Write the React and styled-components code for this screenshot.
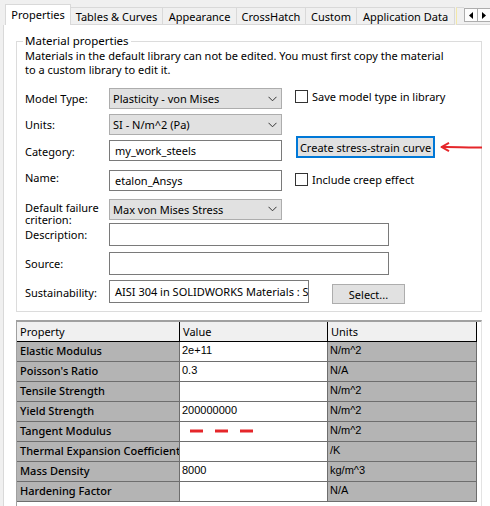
import styled, { createGlobalStyle } from "styled-components";

const GlobalStyle = createGlobalStyle`
  html, body {
    margin: 0;
    padding: 0;
    background: #ffffff;
  }
  body {
    font-family: "Noto Sans", "Liberation Sans", sans-serif;
    font-size: 11px;
    color: #000000;
  }
`;

const Window = styled.div`
  width: 490px;
  height: 506px;
  overflow: hidden;
  display: flex;
  flex-direction: column;
  background: #ffffff;
`;

const TabStrip = styled.div`
  height: 25px;
  flex: none;
  display: flex;
  align-items: flex-end;
  padding-left: 5px;
  background: #f0f0f0;
`;

const Tab = styled.div`
  width: ${(p) => p.$w}px;
  height: ${(p) => (p.$active ? 21 : 18)}px;
  box-sizing: border-box;
  display: flex;
  align-items: center;
  justify-content: center;
  padding-bottom: ${(p) => (p.$active ? 2 : 0)}px;
  background: ${(p) => (p.$active ? "#ffffff" : "#f0f0f0")};
  border-top: 1px solid #d9d9d9;
  border-right: 1px solid #d9d9d9;
  border-left: ${(p) => (p.$active ? "1px solid #d9d9d9" : "none")};
  border-bottom: ${(p) => (p.$active ? "none" : "1px solid #d9d9d9")};
  white-space: nowrap;
  flex: none;
`;

const PartialTab = styled.div`
  width: 8px;
  height: 18px;
  box-sizing: border-box;
  border-top: 1px solid #d9d9d9;
  border-bottom: 1px solid #d9d9d9;
  border-left: 1px solid #f3e8a8;
  margin-left: 1px;
  flex: none;
`;

const ScrollArea = styled.div`
  flex: 1;
  height: 25px;
  box-sizing: border-box;
  border-bottom: 1px solid #d9d9d9;
  display: flex;
  align-items: flex-start;
  padding-top: 8px;
`;

const ScrollButton = styled.div`
  width: 14px;
  height: 14px;
  box-sizing: border-box;
  border: 1px solid #adadad;
  background: #fdfdfd;
  display: flex;
  align-items: center;
  justify-content: center;
  margin-left: ${(p) => (p.$first ? 0 : -1)}px;
`;

const Body = styled.div`
  flex: 1;
  display: flex;
  min-height: 0;
`;

const Gutter = styled.div`
  width: 3px;
  flex: none;
  background: #f0f0f0;
`;

const Panel = styled.div`
  flex: 1;
  border-left: 1px solid #d9d9d9;
  background: #ffffff;
  display: flex;
  flex-direction: column;
  padding-left: 12px;
  min-height: 0;
`;

const Group = styled.fieldset`
  margin: 8px 0 0 0;
  width: 466px;
  box-sizing: border-box;
  border: 1px solid #dcdcdc;
  padding: 0 0 6px 8px;
  min-width: 0;
  flex: none;
`;

const Legend = styled.legend`
  padding: 0 2px;
  margin-left: -2px;
  line-height: 16px;
  font-size: 11.5px;
`;

const Notice = styled.div`
  line-height: 14px;
  margin-bottom: 11px;
  white-space: nowrap;
`;

const Row = styled.div`
  display: flex;
  align-items: flex-start;
  height: ${(p) => p.$h}px;
`;

const Field = styled.div`
  display: flex;
  align-items: center;
  margin-top: ${(p) => p.$dy || 0}px;
  flex: none;
`;

const Label = styled.div`
  width: 84px;
  flex: none;
  line-height: ${(p) => (p.$tight ? 12 : 15)}px;
  position: relative;
  top: ${(p) => p.$nudge || 0}px;
  white-space: nowrap;
`;

const Select = styled.div`
  width: 173px;
  height: 21px;
  box-sizing: border-box;
  background: #e1e1e1;
  border: 1px solid #adadad;
  display: flex;
  align-items: center;
  justify-content: space-between;
  padding: 0 4px 0 3px;
  white-space: nowrap;
`;

const Input = styled.div`
  width: ${(p) => p.$w || 173}px;
  height: ${(p) => p.$h || 21}px;
  box-sizing: border-box;
  background: #ffffff;
  border: 1px solid #7a7a7a;
  display: flex;
  align-items: center;
  padding-left: 5px;
  white-space: nowrap;
  overflow: hidden;
`;

const Check = styled.label`
  display: flex;
  align-items: center;
  gap: 4px;
  margin-left: 13px;
  margin-top: ${(p) => p.$dy || 0}px;
  white-space: nowrap;
`;

const Box = styled.span`
  width: 13px;
  height: 13px;
  box-sizing: border-box;
  border: 1px solid #333333;
  background: #ffffff;
  flex: none;
`;

const Button = styled.div`
  height: ${(p) => (p.$focus ? 22 : 20)}px;
  box-sizing: border-box;
  background: #e1e1e1;
  border: ${(p) => (p.$focus ? "2px solid #0078d7" : "1px solid #adadad")};
  display: flex;
  align-items: center;
  justify-content: center;
  padding: 0 ${(p) => (p.$w ? 0 : 4)}px;
  width: ${(p) => (p.$w ? `${p.$w}px` : "auto")};
  margin-left: ${(p) => p.$ml || 0}px;
  margin-top: ${(p) => p.$dy || 0}px;
  white-space: nowrap;
  flex: none;
`;

const Arrow = styled.svg`
  margin-left: 5px;
  margin-top: 5px;
  flex: none;
`;

const Table = styled.div`
  margin-top: 8px;
  width: 466px;
  flex: 1;
  box-sizing: border-box;
  border-top: 2px solid #a0a0a0;
  border-left: 1px solid #a0a0a0;
  border-right: 1px solid #e3e3e3;
  overflow: hidden;
`;

const TRow = styled.div`
  display: flex;
  height: 20px;
  width: 460px;
  box-sizing: border-box;
  border-bottom: 1px solid ${(p) => (p.$head ? "#000000" : "#6e6e6e")};
`;

const Cell = styled.div`
  width: ${(p) => p.$w}px;
  box-sizing: border-box;
  flex: none;
  background: ${(p) => p.$bg};
  border-right: 1px solid ${(p) => (p.$head ? "#000000" : "#6e6e6e")};
  display: flex;
  align-items: center;
  padding-left: ${(p) => (p.$mono ? 2 : 3)}px;
  padding-bottom: ${(p) => (p.$head ? 1 : 3)}px;
  white-space: nowrap;
  overflow: hidden;
  font-family: ${(p) =>
    p.$mono ? '"Liberation Sans", Arial, sans-serif' : '"Noto Sans", sans-serif'};
  font-size: 11px;
  font-weight: ${(p) => (p.$strong ? 500 : 400)};
`;

const Chevron = () => (
  <svg width="9" height="6" viewBox="0 0 9 6">
    <polyline points="0.5,0.8 4.5,4.8 8.5,0.8" fill="none" stroke="#333" strokeWidth="1" />
  </svg>
);

const tabs = [
  ["Properties", 66],
  ["Tables & Curves", 92],
  ["Appearance", 74],
  ["CrossHatch", 69],
  ["Custom", 51],
  ["Application Data", 98],
];

const rows = [
  ["Elastic Modulus", "2e+11", "N/m^2"],
  ["Poisson's Ratio", "0.3", "N/A"],
  ["Tensile Strength", "", "N/m^2"],
  ["Yield Strength", "200000000", "N/m^2"],
  ["Tangent Modulus", "dash", "N/m^2"],
  ["Thermal Expansion Coefficient", "", "/K"],
  ["Mass Density", "8000", "kg/m^3"],
  ["Hardening Factor", "", "N/A"],
];

const App = () => (
  <Window>
    <GlobalStyle />
    <TabStrip>
      {tabs.map(([name, w], i) => (
        <Tab key={name} $w={w} $active={i === 0}>
          {name}
        </Tab>
      ))}
      <PartialTab />
      <ScrollArea>
        <ScrollButton $first>
          <svg width="4" height="7" viewBox="0 0 4 7">
            <polygon points="4,0 0,3.5 4,7" fill="#000" />
          </svg>
        </ScrollButton>
        <ScrollButton>
          <svg width="4" height="7" viewBox="0 0 4 7">
            <polygon points="0,0 4,3.5 0,7" fill="#000" />
          </svg>
        </ScrollButton>
      </ScrollArea>
    </TabStrip>
    <Body>
      <Gutter />
      <Panel>
        <Group>
          <Legend>Material properties</Legend>
          <Notice>
            Materials in the default library can not be edited. You must first copy the material
            <br />
            to a custom library to edit it.
          </Notice>

          <Row $h={26}>
            <Field>
              <Label>Model Type:</Label>
              <Select>
                Plasticity - von Mises
                <Chevron />
              </Select>
            </Field>
            <Check $dy={1}>
              <Box />
              Save model type in library
            </Check>
          </Row>

          <Row $h={22}>
            <Field>
              <Label>Units:</Label>
              <Select>
                SI - N/m^2 (Pa)
                <Chevron />
              </Select>
            </Field>
          </Row>

          <Row $h={34}>
            <Field $dy={4}>
              <Label $nudge={1}>Category:</Label>
              <Input>my_work_steels</Input>
            </Field>
            <Button $focus $ml={14} $w={139}>Create stress-strain curve</Button>
            <Arrow width="42" height="12" viewBox="0 0 42 12">
              <path d="M1.5 6 C 12 5.5, 28 7, 42 6.5" fill="none" stroke="#e5262a" strokeWidth="2" />
              <path d="M9 1.8 L1.5 6 L9 10.2" fill="none" stroke="#e5262a" strokeWidth="2" strokeLinejoin="round" />
            </Arrow>
          </Row>

          <Row $h={27}>
            <Field>
              <Label $nudge={-3}>Name:</Label>
              <Input>etalon_Ansys</Input>
            </Field>
            <Check $dy={2}>
              <Box />
              Include creep effect
            </Check>
          </Row>

          <Row $h={26}>
            <Field>
              <Label $tight $nudge={5}>
                Default failure
                <br />
                criterion:
              </Label>
              <Select>
                Max von Mises Stress
                <Chevron />
              </Select>
            </Field>
          </Row>

          <Row $h={29}>
            <Field>
              <Label>Description:</Label>
              <Input $w={280} $h={23} />
            </Field>
          </Row>

          <Row $h={28}>
            <Field>
              <Label>Source:</Label>
              <Input $w={280} $h={23} />
            </Field>
          </Row>

          <Row $h={25}>
            <Field>
              <Label $nudge={1}>Sustainability:</Label>
              <Input $w={200} $h={23}>AISI 304 in SOLIDWORKS Materials : SOLIDWORKS</Input>
            </Field>
            <Button $w={73} $ml={23} $dy={4}>Select...</Button>
          </Row>
        </Group>

        <Table>
          <TRow $head>
            <Cell $head $w={163} $bg="#f0f0f0">Property</Cell>
            <Cell $head $w={148} $bg="#f0f0f0">Value</Cell>
            <Cell $head $w={149} $bg="#f0f0f0">Units</Cell>
          </TRow>
          {rows.map(([prop, value, unit]) => (
            <TRow key={prop}>
              <Cell $w={163} $bg="#b4b4b4" $strong>{prop}</Cell>
              <Cell $w={148} $bg="#ffffff" $mono>
                {value === "dash" ? (
                  <svg width="70" height="4" viewBox="0 0 70 4" style={{ marginLeft: 8, marginTop: 2 }}>
                    <line x1="0" y1="2" x2="64" y2="2" stroke="#e5262a" strokeWidth="3" strokeDasharray="13 12" />
                  </svg>
                ) : (
                  value
                )}
              </Cell>
              <Cell $w={149} $bg="#b4b4b4" $mono>{unit}</Cell>
            </TRow>
          ))}
        </Table>
      </Panel>
    </Body>
  </Window>
);

export default App;
